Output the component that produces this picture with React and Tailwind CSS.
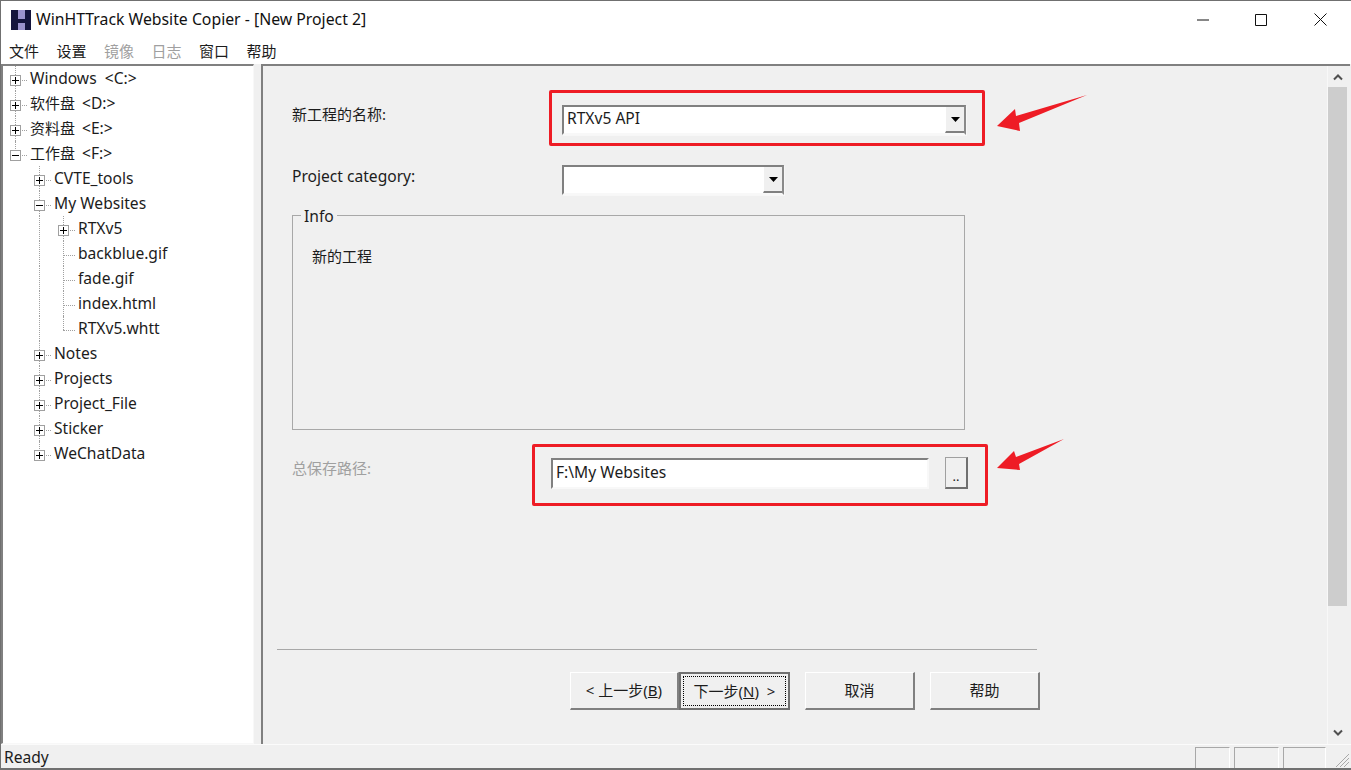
import React from 'react'

const FONT = '"Noto Sans", "Noto Sans CJK SC", sans-serif'

const tree = [
  { label: 'Windows\u00a0\u00a0<C:>', guides: ['tee'], box: '+' },
  { cjk: '软件盘', label: '<D:>', guides: ['tee'], box: '+' },
  { cjk: '资料盘', label: '<E:>', guides: ['tee'], box: '+' },
  { cjk: '工作盘', label: '<F:>', guides: ['last'], box: '-' },
  { label: 'CVTE_tools', guides: ['none', 'tee'], box: '+' },
  { label: 'My Websites', guides: ['none', 'tee'], box: '-' },
  { label: 'RTXv5', guides: ['none', 'pass', 'tee'], box: '+' },
  { label: 'backblue.gif', guides: ['none', 'pass', 'tee'] },
  { label: 'fade.gif', guides: ['none', 'pass', 'tee'] },
  { label: 'index.html', guides: ['none', 'pass', 'tee'] },
  { label: 'RTXv5.whtt', guides: ['none', 'pass', 'last'] },
  { label: 'Notes', guides: ['none', 'tee'], box: '+' },
  { label: 'Projects', guides: ['none', 'tee'], box: '+' },
  { label: 'Project_File', guides: ['none', 'tee'], box: '+' },
  { label: 'Sticker', guides: ['none', 'tee'], box: '+' },
  { label: 'WeChatData', guides: ['none', 'last'], box: '+' },
]

const Guide = ({ kind, box, isLast }) => (
  <div className="relative w-6 h-[25px] shrink-0">
    {(kind === 'pass' || kind === 'tee') && (
      <div className="absolute left-3 top-0 bottom-0 border-l border-dotted border-[#a0a0a0]" />
    )}
    {kind === 'last' && (
      <div className="absolute left-3 top-0 h-[14px] border-l border-dotted border-[#a0a0a0]" />
    )}
    {isLast && kind !== 'none' && (
      <div className="absolute left-3 right-0 top-[14px] border-t border-dotted border-[#a0a0a0]" />
    )}
    {box && (
      <div className="absolute left-[7px] top-[9px] w-[11px] h-[11px] border border-[#a0a0a0] bg-white flex items-center justify-center">
        <svg width="9" height="9" viewBox="0 0 9 9">
          <path d="M1 4.5H8" stroke="#000" strokeWidth="1" />
          {box === '+' && <path d="M4.5 1V8" stroke="#000" strokeWidth="1" />}
        </svg>
      </div>
    )}
  </div>
)

const TreeRow = ({ item }) => (
  <div className="flex h-[25px] items-center">
    {item.guides.map((g, i) => (
      <Guide key={i} kind={g} isLast={i === item.guides.length - 1} box={i === item.guides.length - 1 ? item.box : null} />
    ))}
    <span className="ml-[3px] text-[15.6px] leading-[25px] text-[#1c1c1c] whitespace-nowrap">
      {item.cjk && <span className="text-[15px] mr-[7px]">{item.cjk}</span>}
      {item.label}
    </span>
  </div>
)

const Combo = ({ className, text }) => (
  <div className={`flex bg-white border-2 border-t-[#808080] border-l-[#808080] border-r-[#8a8a8a] border-b-[#f8f8f8] shadow-[1px_1px_0_#f7f7f7] ${className}`}>
    <div className="flex-1 pl-[3px] text-[15.6px] leading-[22px] text-[#1c1c1c]">{text}</div>
    <div className="w-[19px] bg-[#f0f0f0] border-b-2 border-l border-b-[#808080] border-l-white flex items-center justify-center">
      <svg width="9" height="5" viewBox="0 0 9 5"><path d="M0 0H9L4.5 5Z" fill="#000" /></svg>
    </div>
  </div>
)

const Btn = ({ children, className = '' }) => (
  <div className={`h-[38px] flex items-center justify-center text-[15px] text-[#1c1c1c] bg-[#f0f0f0] border-t border-l border-t-white border-l-white border-r-2 border-b-2 border-r-[#808080] border-b-[#808080] ${className}`}>
    {children}
  </div>
)

export default function App() {
  return (
    <div className="relative w-[1351px] h-[770px] overflow-hidden bg-white border-t border-l border-b-2 border-[#707070] flex flex-col" style={{ fontFamily: FONT }}>
      {/* title bar */}
      <div className="h-[37px] flex items-center shrink-0">
        <svg className="ml-[10px]" width="20" height="20" viewBox="0 0 20 20">
          <rect width="20" height="20" fill="#9a92cc" />
          <path d="M0 0H7V9H14V0H20V20H14V13H7V20H0Z" fill="#14143c" />
        </svg>
        <span className="ml-[5px] text-[15.8px] text-[#111] whitespace-nowrap">WinHTTrack Website Copier - [New Project 2]</span>
        <div className="ml-auto flex items-center">
          <svg className="mr-[46px]" width="12" height="2" viewBox="0 0 12 2"><path d="M0 1H12" stroke="#111" /></svg>
          <svg className="mr-[47px]" width="12" height="12" viewBox="0 0 12 12"><path d="M.5.5H11.5V11.5H.5Z" fill="none" stroke="#111" /></svg>
          <svg className="mr-[24px]" width="13" height="13" viewBox="0 0 13 13"><path d="M.5.5L12.5 12.5M12.5.5L.5 12.5" stroke="#111" /></svg>
        </div>
      </div>

      {/* menu */}
      <div className="h-[26px] flex items-center pl-[8px] gap-[17.5px] text-[15px] shrink-0 text-[#1c1c1c]">
        <span>文件</span>
        <span>设置</span>
        <span className="text-[#a0a0a0]">镜像</span>
        <span className="text-[#a0a0a0]">日志</span>
        <span>窗口</span>
        <span>帮助</span>
      </div>

      <div className="flex-1 flex min-h-0 bg-[#f0f0f0]">
        {/* tree */}
        <div className="w-[253px] shrink-0 bg-white border-t-2 border-l-2 border-t-[#808080] border-l-[#808080] border-r border-b border-r-[#f8f8f8] border-b-[#f8f8f8]">
          {tree.map((item, i) => <TreeRow key={i} item={item} />)}
        </div>

        {/* wizard */}
        <div className="w-[1089px] ml-[7px] shrink-0 border-t-2 border-l-2 border-t-[#808080] border-l-[#808080] flex">
          <div className="flex-1 min-w-0">
            <div className="flex items-center mt-[39px] ml-[29px]">
              <div className="w-[270px] text-[15px] text-[#1c1c1c] -mt-[12px]">新工程的名称:</div>
              <Combo className="w-[404px] h-[30px]" text="RTXv5 API" />
            </div>
            <div className="flex items-center mt-[30px] ml-[29px]">
              <div className="w-[270px] text-[15.6px] text-[#1c1c1c] -mt-[6px]">Project category:</div>
              <Combo className="w-[222px] h-[30px]" />
            </div>
            <div className="relative mt-[20px] ml-[29px] w-[673px] h-[215px] border border-[#a8a8a8]">
              <span className="absolute left-[8px] -top-[10px] px-[3px] bg-[#f0f0f0] text-[15.6px] leading-[20px] text-[#1c1c1c]">Info</span>
              <p className="mt-[29px] ml-[19px] text-[15px] text-[#1c1c1c]">新的工程</p>
            </div>
            <div className="flex items-center mt-[27px] ml-[29px]">
              <div className="w-[259px] text-[15px] text-[#a0a0a0] -mt-[10px]">总保存路径:</div>
              <div className="w-[378px] h-[31px] bg-white border-2 border-t-[#808080] border-l-[#808080] border-r-[#f8f8f8] border-b-[#f8f8f8] pl-[3px] text-[15.6px] leading-[24px] text-[#1c1c1c]">F:\My Websites</div>
              <div className="ml-[16px] w-[23px] h-[32px] bg-[#f0f0f0] border-t border-l border-t-[#a0a0a0] border-l-[#a0a0a0] border-r-2 border-b-2 border-r-[#707070] border-b-[#707070] flex items-end justify-center pb-[3px] text-[13px] leading-[16px] text-[#1c1c1c]">..</div>
            </div>
            <div className="mt-[160px] ml-[14px] w-[760px] border-t border-[#a8a8a8]" />
            <div className="flex mt-[22px] ml-[307px]">
              <Btn className="w-[109px]">&lt; 上一步(<u>B</u>)</Btn>
              <div className="w-[111px] h-[38px] flex items-center justify-center text-[15px] text-[#1c1c1c] bg-[#f0f0f0] border-2 border-[#707070]">
                <span className="w-[103px] h-[30px] flex items-center justify-center border border-dotted border-black">下一步(<u>N</u>) &nbsp;&gt;</span>
              </div>
              <Btn className="w-[110px] ml-[15px]">取消</Btn>
              <Btn className="w-[110px] ml-[15px]">帮助</Btn>
            </div>
          </div>
          {/* scrollbar */}
          <div className="w-[20px] shrink-0 flex flex-col items-center border-l border-[#f8f8f8]">
            <svg className="mt-[8px] mb-[6px] shrink-0" width="10" height="7" viewBox="0 0 10 7"><path d="M1 5.5L5 1.5L9 5.5" fill="none" stroke="#505050" strokeWidth="2" /></svg>
            <div className="w-[19px] h-[519px] shrink-0 bg-[#cdcdcd]" />
            <div className="flex-1" />
            <svg className="mb-[8px] shrink-0" width="10" height="7" viewBox="0 0 10 7"><path d="M1 1.5L5 5.5L9 1.5" fill="none" stroke="#505050" strokeWidth="2" /></svg>
          </div>
          <div className="w-[3px] shrink-0" />
        </div>
      </div>

      {/* status bar */}
      <div className="h-[24px] shrink-0 bg-[#f0f0f0] border-t border-[#fbfbfb] flex items-center pl-[3px] relative">
        <span className="text-[15.6px] leading-[22px] text-[#1c1c1c]">Ready</span>
        <div className="ml-auto flex self-end gap-[4px] mr-[25px] h-[21px]">
          <div className="w-[35px] border-t border-l border-[#a8a8a8] border-r border-r-white" />
          <div className="w-[45px] border-t border-l border-[#a8a8a8] border-r border-r-white" />
          <div className="w-[43px] border-t border-l border-[#a8a8a8] border-r border-r-white" />
        </div>
        <svg className="absolute right-[1px] bottom-0" width="15" height="15" viewBox="0 0 15 15">
          <path d="M14 1L1 14M14 5L5 14M14 9L9 14" stroke="#a8a8a8" />
        </svg>
      </div>

      {/* screenshot annotations */}
      <div className="absolute left-[548px] top-[89px] w-[436px] h-[56px] border-[3px] border-[#ee1c25] rounded-[2px]" />
      <div className="absolute left-[531px] top-[443px] w-[456px] h-[62px] border-[3px] border-[#ee1c25] rounded-[2px]" />
      <svg className="absolute left-[996px] top-[92px]" width="91" height="40" viewBox="0 0 91 40">
        <path d="M0 33L18 16L19 23L90 2L22 30L23 38Z" fill="#ee1c25" />
      </svg>
      <svg className="absolute left-[996px] top-[436px]" width="68" height="36" viewBox="0 0 68 36">
        <path d="M0 31L17 14L19 20L67 2L22 27L23 33Z" fill="#ee1c25" />
      </svg>
    </div>
  )
}
